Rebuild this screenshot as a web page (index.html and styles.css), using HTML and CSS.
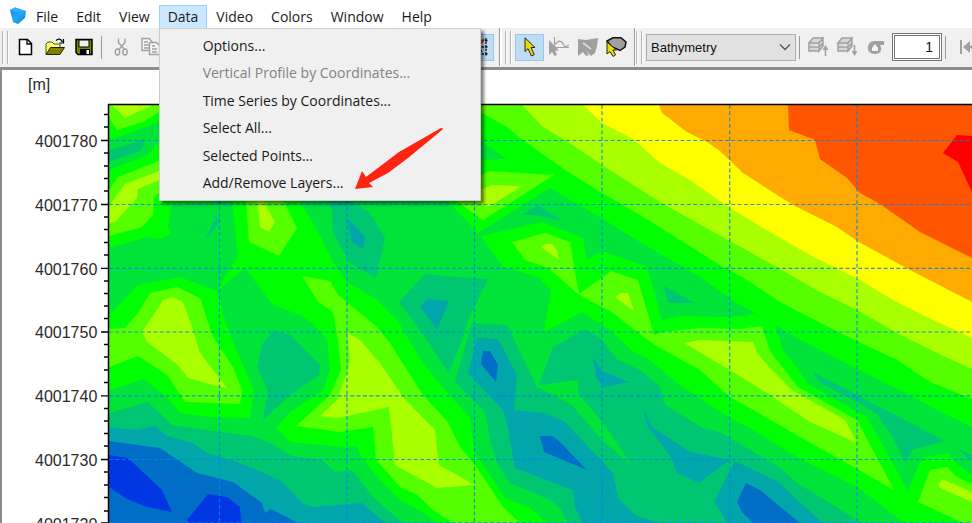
FILE: index.html
```html
<!DOCTYPE html>
<html lang="en">
<head>
<meta charset="utf-8">
<title>Bathymetry</title>
<link rel="stylesheet" href="styles.css">
</head>
<body>
<nav class="menubar" aria-label="Main menu">
  <svg class="logo" viewBox="0 0 18 18" aria-hidden="true">
    <defs><linearGradient id="lg" x1="0" y1="0" x2="1" y2="1"><stop offset="0" stop-color="#1687d8"/><stop offset=".5" stop-color="#22a7fa"/><stop offset="1" stop-color="#1480d0"/></linearGradient></defs>
    <path fill="url(#lg)" d="M1 3 6 .5 17 4 16 11 9 17 4 15Z"/><path fill="#2fb0fb" d="M1 3 6 .5 17 4 7 5Z"/>
  </svg>
  <button class="menu">File</button>
  <button class="menu">Edit</button>
  <button class="menu">View</button>
  <div class="menu-wrap">
    <button class="menu open" aria-expanded="true">Data</button>
    <div class="popup" role="menu">
      <button role="menuitem">Options...</button>
      <button role="menuitem" disabled>Vertical Profile by Coordinates...</button>
      <button role="menuitem">Time Series by Coordinates...</button>
      <button role="menuitem">Select All...</button>
      <button role="menuitem">Selected Points...</button>
      <button role="menuitem">Add/Remove Layers...</button>
      <svg class="pointer" viewBox="0 0 90 64" aria-hidden="true"><path fill="#ff2412" d="M1 62 8 44 12 50 45 25 87 1 89 1.500 88 3 54 31 34 46 15 56 19 60Z"/></svg>
    </div>
  </div>
  <button class="menu">Video</button>
  <button class="menu">Colors</button>
  <button class="menu">Window</button>
  <button class="menu">Help</button>
</nav>

<div class="toolbar" role="toolbar" aria-label="Tools">
  <div class="group files">
    <span class="grip"></span>
    <button class="tool" aria-label="New"><svg viewBox="0 0 22 20"><path d="M4.500 2.500h8l4 4v11h-12z" fill="#fff" stroke="#000" stroke-width="1.500"/><path d="M12 2.500v4.500h4.500" fill="none" stroke="#000" stroke-width="1.300"/></svg></button>
    <button class="tool" aria-label="Open"><svg viewBox="0 0 22 20"><path d="M2 17V7l2-2h4l2 2h6v4" fill="#ffff66" stroke="#55550a"/><path d="M2 17.500 6.500 10.500H20.500L16 17.500Z" fill="#808000" stroke="#222200"/><path d="M12 3.500c2-2 5-2 6.500 1.500M19.500 2v4h-4" fill="none" stroke="#000" stroke-width="1.200"/></svg></button>
    <button class="tool" aria-label="Save"><svg viewBox="0 0 22 20"><path d="M3 2.500h16v15H5l-2-2z" fill="#808000" stroke="#000" stroke-width="1.500"/><path d="M6 3h10v7H6z" fill="#f0f0f0" stroke="#000"/><path d="M7 12h10v5H7z"/><path d="M13.500 13h2.500v4h-2.500z" fill="#fff"/></svg></button>
    <span class="sep"></span>
    <button class="tool" aria-label="Cut" disabled><svg viewBox="0 0 22 20"><g fill="none" stroke="#a0a0a0" stroke-width="1.400"><path d="M6.500 1.500v4l6 7M13 1.500v4L7 12.500"/><ellipse cx="5.500" cy="15" rx="2.200" ry="3"/><ellipse cx="13" cy="15" rx="2.200" ry="3"/></g></svg></button>
    <button class="tool" aria-label="Copy" disabled><svg viewBox="0 0 22 20"><g fill="#f4f4f4" stroke="#a0a0a0" stroke-width="1.300"><path d="M1 1.500h7l3 3v9H1z"/><path d="M3 5h4M3 8h5M3 11h5"/><path d="M8.500 5.500h7l3 3v9h-10z"/><path d="M11 9h3M11 12h5M11 15h5"/></g></svg></button>
    <button class="tool on last" aria-label="Grid"><svg viewBox="0 0 22 20"><g fill="none" stroke="#111" stroke-width="1.300" stroke-dasharray="2.500 1"><path d="M2 3.500h17M2 10h17M2 17h17M4 1v18M11 1v18M17 1v18"/></g><path d="M10 6c3 0 4-1 5-4" fill="none" stroke="#e02020" stroke-width="1.500"/><path d="M9 14h4" stroke="#2020d0" stroke-width="2"/></svg></button>
  </div>
  <span class="divider"></span>
  <div class="group">
    <span class="grip"></span>
    <button class="tool on" aria-label="Select"><svg viewBox="0 0 22 20"><path d="M6 .8v13.700l3-2.800 3.500 7.300 2.800-1.400L12 10.500h4z" fill="#e6dc00" stroke="#222"/></svg></button>
    <button class="tool" aria-label="Profile" disabled><svg viewBox="0 0 22 20"><path d="M1 3v15l3-3 2.500 4 2.500-1-2-4.500h4z" fill="#a0a0a0"/><path d="M6.500 0v17M4 10.500h17M7 7l4-3 3 1 3 5 4-2" fill="none" stroke="#a0a0a0" stroke-width="1.200"/></svg></button>
    <button class="tool" aria-label="Area profile" disabled><svg viewBox="0 0 22 20"><path d="M1 2 9 3 14 2 21 1 20 9 18 16 14 19 9 13 12 18 9 19 6 15 1 19Z" fill="#a0a0a0"/><path d="m6 6 8 6" stroke="#e8e8e8" stroke-width="1.500"/></svg></button>
    <button class="tool" aria-label="Lasso"><svg viewBox="0 0 22 20"><path d="M1 4 7 .8h8L20 5l-1 5-5 3.500L6 10Z" fill="#a0a0a0" stroke="#111" stroke-width="1.500"/><path d="M1 5v12l3-2.500 3 5 2.500-1.500L7 13h3.500z" fill="#e6dc00" stroke="#222"/></svg></button>
  </div>
  <span class="divider second"></span>
  <div class="group">
    <span class="grip"></span>
    <div class="combo">
      <select aria-label="Layer"><option>Bathymetry</option></select>
      <svg viewBox="0 0 12 8" aria-hidden="true"><path d="m1 1.500 5 5 5-5" fill="none" stroke="#555" stroke-width="1.400"/></svg>
    </div>
    <span class="sep"></span>
    <button class="tool" aria-label="Layer up" disabled><svg viewBox="0 0 22 20"><g fill="#d8d8d8" stroke="#a0a0a0" stroke-width="1.500"><path d="M2 6 6 1h10l-4 5zM2 6h10v8H2zM12 6l4-5v8l-4 5zM2 10h10l4-4"/></g><path d="M18.500 19v-8" stroke="#a0a0a0" stroke-width="1.600"/><path d="m15.500 13 3-5 3 5z" fill="#a0a0a0"/></svg></button>
    <button class="tool" aria-label="Layer down" disabled><svg viewBox="0 0 22 20"><g fill="#d8d8d8" stroke="#a0a0a0" stroke-width="1.500"><path d="M2 6 6 1h10l-4 5zM2 6h10v8H2zM12 6l4-5v8l-4 5zM2 10h10l4-4"/></g><path d="M18.500 8v8" stroke="#a0a0a0" stroke-width="1.600"/><path d="m15.500 14 3 5 3-5z" fill="#a0a0a0"/></svg></button>
    <button class="tool" aria-label="Sigma" disabled><svg viewBox="0 0 22 20"><path d="M19 4v4h-4c3 5 0 9-5 9S2 14 3 9.500C4 5 7 4 11 4z" fill="#a0a0a0"/><path d="M10 7 7 11v3h6v-3z" fill="#f4f4f4"/></svg></button>
    <input class="number" type="text" value="1" aria-label="Layer number">
    <span class="sep"></span>
    <button class="tool first-frame" aria-label="First" disabled><svg viewBox="0 0 22 20"><path d="M2 3v14" stroke="#a0a0a0" stroke-width="2"/><path d="M4 10l7-6v12zM11 10l7-6v12z" fill="#a0a0a0"/><path d="M5 10h15" stroke="#a0a0a0" stroke-width="2.500"/></svg></button>
  </div>
</div>

<main class="view">
<svg class="chart" viewBox="3 70 969 453" preserveAspectRatio="xMinYMin slice" role="img" aria-label="Bathymetry contour map">
  <defs><clipPath id="plot"><path d="M109 105H3000V3000H109Z"/></clipPath></defs>
  <g clip-path="url(#plot)">
    <path class="d" d="M109 105H972V523H109Z"/>
    <!-- north-west -->
    <path class="g" d="M109 105H480V200H232L172 204 168 227 171 232 167 236 160 239 147 237 109 248Z"/>
    <path class="d" d="M109 140 133 132 159 122 185 112V130L159 142 148 155 109 170Z"/>
    <path class="t" d="M109 150 125 146 144 139 143 147 140 151 109 162Z"/>
    <path class="m" d="M109 105H172L159 112 143 122 117 130 109 118Z"/>
    <path class="l" d="M112 105H153L125 118Z"/>
    <path class="m" d="M109 190 118 177 159 161 180 160V190L159 193 154 197 153 215 142 227 109 236Z"/>
    <path class="l" d="M109 206 125 184 159 171V180L138 189 137 198 115 222 109 223Z"/>
    <path class="t" d="M208 214 220 218 218 225 205 240 213 222 217 219Z"/>
    <!-- central ridge -->
    <path class="g" d="M232 200H299L317 230 333 262 347 282 377 300 397 320 409 340 423 363 445 390 470 418 475 453 505 498 530 508 547 523H437L422 512 400 500 380 480 360 455 357 446 343 447 290 442 276 428 290 412 323 390 330 370 327 340 312 323 300 315 273 305 245 268 217 291 238 256Z"/>
    <path class="m" d="M246 200 249 242 279 256 297 228 283 200Z"/>
    <path class="l" d="M257 200 260 227 269 232 275 222 263 200Z"/>
    <path class="m" d="M302 276 330 281 338 295 377 327 390 343 407 370 423 395 448 422 460 447 475 465 503 507 520 523H453L433 510 417 495 400 487 376 460 373 427 340 432 296 426 330 395 341 370 338 340 333 312 318 302Z"/>
    <path class="l" d="M347 332 360 340 380 363 403 397 435 430 439 465 475 485 437 488 395 465 389 407 338 418 320 416 337 400 347 373 350 360Z"/>
    <!-- western ridge -->
    <path class="g" d="M109 315 138 285 180 277 217 291 222 310 232 340 254 390 250 418 210 417 180 413 167 397 143 379 109 391Z"/>
    <path class="m" d="M109 329 125 328 138 313 150 293 177 287 200 298 213 337 233 367 242 390 240 404 185 402 167 375 138 356 109 367Z"/>
    <path class="l" d="M142 332 157 310 163 300 173 297 183 302 192 327 200 353 217 375 227 388 213 385 188 378 178 365 147 342Z"/>
    <!-- inner hollows -->
    <path class="t" d="M273 330 290 335 320 365 319 375 290 395 263 420 268 392 257 367 262 345Z"/>
    <path class="t" d="M327 200H350L370 213 385 238 376 278 350 263 333 233 332 210Z"/>
    <path class="c" d="M347 218 365 237 363 249 352 242Z"/>
    <path class="t" d="M425 274 457 277 488 279 468 320 462 340 449 373 422 333 399 302Z"/>
    <path class="c" d="M428 299 449 301 437 329 420 307Z"/>
    <!-- south-west basin -->
    <path class="t" d="M109 413 148 402 172 425 213 431 253 436 270 443 292 456 322 460 335 472 352 470 373 497 397 518 405 523H109Z"/>
    <path class="c" d="M109 427 135 430 155 426 167 436 193 443 207 453 240 463 280 480 290 490 302 503 313 507 362 503 385 523H109Z"/>
    <path class="b" d="M109 441 160 448 197 473 233 482 262 503 265 513 271 509 298 523H109Z"/>
    <path class="n" d="M109 455 128 458 162 490 172 512 147 507 127 499 109 487ZM187 520 208 494 227 497 240 507 241 523H189Z"/>
    <!-- north-east slope -->
    <path class="g" d="M447 200V105H972V523H905L857 487 797 457 750 428 730 418 680 385 647 358 633 352 610 330 582 312 544 332 551 290 538 277 503 267 481 236 478 233Z"/>
    <path class="d" d="M478 233 550 188 598 216 640 242 700 277 735 302 755 313 745 316 720 317 680 316 662 320 647 267 602 251 587 260 583 238 542 222 481 236Z"/>
    <path class="t" d="M522 215 538 205 562 221 537 215ZM664 286 695 303H668Z"/>
    <path class="d" d="M470 135 480 141 507 159 480 160H470Z"/>
    <path class="m" d="M455 200 483 220 554 175 490 171 470 180Z"/>
    <path class="l" d="M470 200 485 206H490L522 186 492 185 470 194Z"/>
    <path class="m" d="M512 242 545 233 570 242 573 260 579 294 611 271 638 280 654 335 662 332 700 328 740 329 762 326 770 351 798 387 857 420 894 490 850 465 800 437 757 412 730 397 700 370 655 345 640 334 613 313 578 294 548 268 525 260Z"/>
    <path class="l" d="M541 247 545 244H552L557 250 559 260ZM615 297 621 293H628L634 311ZM684 343 700 340 753 342 757 353 770 368 792 390 845 420 857 443 810 422 770 395 730 370Z"/>
    <path class="d" d="M775 325 797 338 830 355 857 369 903 392 943 413 972 427V475L957 464 948 453 924 457 920 462 908 491 884 447 866 416 857 412 808 384 797 367 783 350Z"/>
    <path class="t" d="M813 372 857 395 945 441 912 450 906 463 893 438 877 414 857 402 820 383ZM957 448 972 455V462Z"/>
    <path class="m" d="M930 470 947 467 957 477 972 484V523H963L918 502Z"/>
    <path class="l" d="M942 479 972 492V502L938 487Z"/>
    <path class="m" d="M460 105H972V399L930 382 897 360 840 333 780 302 747 280 720 265 640 215 602 193 565 170 520 138 507 127 480 112Z"/>
    <path class="l" d="M522 105H972V369L937 353 897 333 857 310 820 292 773 265 730 241 690 219 660 202 630 183 602 165 568 142 543 127Z"/>
    <path class="y" d="M583 105H972V338L933 320 893 300 860 280 810 255 770 232 730 208 690 180 660 163 633 139 602 123Z"/>
    <path class="o" d="M659 105H972V302L910 270 857 241 837 227 793 205 743 173 720 151 707 142 687 132 662 113Z"/>
    <path class="r" d="M788 105H972V258L920 232 880 204 860 193 847 178 820 159 815 140 789 130Z"/>
    <path class="red" d="M943 153 957 135 972 136V192L958 162Z"/>
    <!-- southern basin -->
    <path class="t" d="M472 323 507 325 537 387 572 405 600 438 632 466 607 428 578 393V380L539 385 553 347 585 329 600 338 618 360 640 370 660 387 665 405 703 428 720 432 762 457 780 468 797 483 830 503 862 523H568L560 508 550 500 510 483 497 463 490 440 485 412 455 382 467 340Z"/>
    <path class="c" d="M477 338 498 339 517 375 514 410 545 413 565 422 613 473 618 498 635 515 657 523H583L575 507 573 490 515 468 507 423 503 410 468 373Z"/>
    <path class="c" d="M593 357 602 371 629 382 603 387 596 377ZM643 408 652 427 690 452 730 460 699 483 677 473 671 457 648 427ZM735 461 780 483 797 500 823 523H727L714 501Z"/>
    <path class="b" d="M483 351H490L498 365 496 382 481 364ZM540 436H552L558 440 587 470 544 452ZM746 483 760 490 800 523H753L742 512 737 502Z"/>
    <path class="grid" d="M109 140.500H972M109 204.500H972M109 268.300H972M109 332H972M109 395.800H972M109 459.500H972M109 522.800H972M219.500 105V523M347 105V523M474.500 105V523M602 105V523M729.700 105V523M857 105V523"/>
  </g>
  <path class="frame" d="M108.500 523V104.500H972"/>
  <path class="ticks" d="M101 140.500h7M101 204.500h7M101 268.300h7M101 332h7M101 395.800h7M101 459.500h7M101 522.800h7M104 114.500h4M104 127h4M104 153h4M104 166h4M104 178.500h4M104 191h4M104 217h4M104 229.500h4M104 242.500h4M104 255h4M104 281h4M104 293.500h4M104 306h4M104 318.500h4M104 344.500h4M104 357h4M104 370h4M104 382.500h4M104 408.500h4M104 421h4M104 433.500h4M104 446h4M104 472h4M104 485h4M104 497.500h4M104 511h4"/>
  <g class="labels">
    <text x="28" y="90">[m]</text>
    <text x="35" y="147">4001780</text>
    <text x="35" y="211">4001770</text>
    <text x="35" y="275">4001760</text>
    <text x="35" y="338">4001750</text>
    <text x="35" y="402">4001740</text>
    <text x="35" y="466">4001730</text>
    <text x="35" y="530">4001720</text>
  </g>
</svg>
</main>
</body>
</html>
```
FILE: styles.css
```css
* { box-sizing: border-box; }
body {
  margin: 0;
  height: 100vh;
  display: flex;
  flex-direction: column;
  overflow: hidden;
  background: #fff;
  color: #1a1a1a;
  font: 14px/20px "Open Sans", "Noto Sans", sans-serif;
}
button { font: inherit; color: inherit; border: 0; background: none; padding: 0; }

.menubar { display: flex; align-items: flex-end; height: 28px; padding-left: 9px; }
.logo { width: 18px; height: 18px; margin-bottom: 3px; }
.menu { height: 23px; padding: 0 8px; border: 1px solid transparent; }
.menu.open { background: #cce8ff; border-color: #99d1ff; border-bottom: 0; }
.menu-wrap { position: relative; }
.popup {
  position: absolute;
  z-index: 2;
  top: 100%;
  left: 0;
  width: 322px;
  height: 173px;
  padding: 3px 0;
  display: grid;
  grid-auto-rows: 1fr;
  background: #f0f0f0;
  border: 1px solid #ccc;
  box-shadow: 3px 3px 3px rgba(0, 0, 0, .5);
}
.popup button { text-align: left; padding-left: 43px; }
.popup button:disabled { color: #838383; }
.pointer { position: absolute; left: 194px; top: 98px; width: 90px; height: 64px; }

.toolbar {
  display: flex;
  flex: none;
  height: 42px;
  padding-bottom: 1px;
  background: #f0f0f0;
  border-bottom: 3px solid #8c8c8c;
  overflow: hidden;
}
.group { display: flex; align-items: center; flex: none; }
.files { width: 499px; padding-left: 2px; padding-right: 5px; }
.grip { flex: none; width: 6px; height: 33px; margin-right: 4px; border: solid #b4b4b4; border-width: 0 1px; box-shadow: 1px 0 #fff, inset 1px 0 #fff; }
.files .grip { margin-right: 3px; }
.sep { flex: none; width: 1px; height: 23px; margin: 0 3px; background: #999; }
.divider { flex: none; width: 3px; margin-right: 3px; border-left: 1px solid #999; background: #fff; }
.second { margin: 0 0 0 3px; width: 2px; }
.tool { flex: none; width: 29px; height: 27px; display: grid; place-items: center; border: 1px solid transparent; }
.tool svg { width: 22px; height: 20px; }
.tool.on { background: #c0dcf3; border-color: #90c8f6; }
.files .sep { margin: 0 6px 0 3px; }
.last { margin-left: auto; }
.combo { display: grid; width: 150px; height: 27px; align-items: center; }
.combo select {
  grid-area: 1 / 1;
  width: 100%;
  height: 100%;
  padding: 0 4px;
  appearance: none;
  color: #111;
  background: #e1e1e1;
  border: 1px solid #adadad;
  border-radius: 0;
  font: 13px "Liberation Sans", sans-serif;
}
.combo svg { grid-area: 1 / 1; justify-self: end; width: 12px; height: 8px; margin-right: 5px; pointer-events: none; }
.number {
  width: 50px;
  height: 28px;
  margin-left: 2px;
  padding: 0 6px;
  text-align: right;
  color: #111;
  background: #fff;
  border: 3px double #777;
  font: 14px "Liberation Sans", sans-serif;
}
.first-frame { margin-left: 6px; }

.view { flex: 1; min-height: 0; border-left: 2px solid #8c8c8c; padding-left: 1px; }
.chart { display: block; width: 100%; height: 100%; }
.labels { font: 16px "Liberation Sans", sans-serif; fill: #2a2a2a; }
.red { fill: #f00; }
.r { fill: #f50; }
.o { fill: #fa0; }
.y { fill: #ff0; }
.l { fill: #af0; }
.m { fill: #5f0; }
.g { fill: #0f0; }
.d { fill: #00e339; }
.t { fill: #00c671; }
.c { fill: #00a6aa; }
.b { fill: #006ec6; }
.n { fill: #0037e3; }
.grid { fill: none; stroke: #0084f0; stroke-opacity: .85; stroke-width: 1.2; stroke-dasharray: 3.900 2.450; }
.frame { fill: none; stroke: #000; stroke-width: 1.500; }
.ticks { fill: none; stroke: #000; stroke-width: 1.300; }
```
